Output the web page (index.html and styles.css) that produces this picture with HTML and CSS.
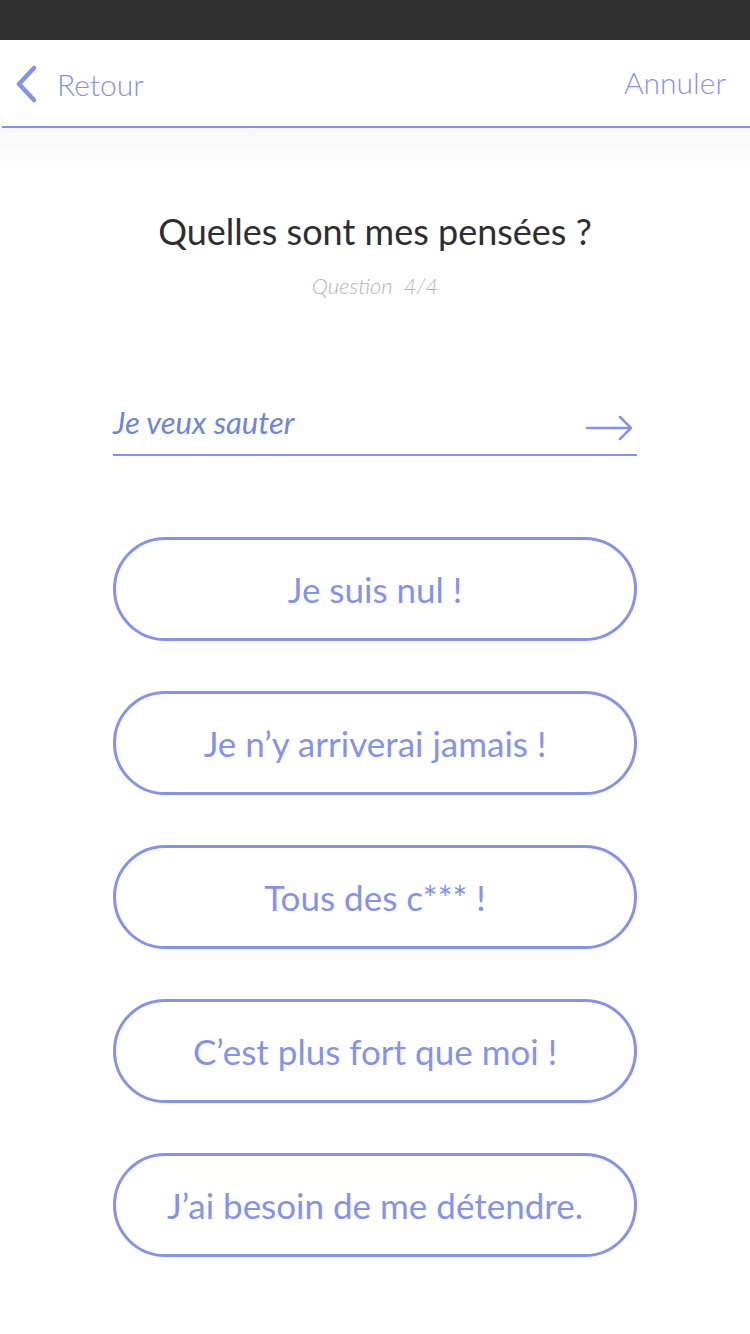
FILE: index.html
```html
<!DOCTYPE html>
<html lang="fr">
<head>
<meta charset="utf-8">
<link rel="stylesheet" href="styles.css">
</head>
<body>
<div class="status"></div>
<header class="nav">
  <a class="back">
    <svg class="chev" width="24" height="38" viewBox="0 0 24 38"><path d="M20 3 L5 19 L20 35" fill="none" stroke="#8592ec" stroke-width="4.5" stroke-linecap="round" stroke-linejoin="round"/></svg>
    <span>Retour</span>
  </a>
  <a class="cancel">Annuler</a>
</header>
<div class="shade"></div>
<main class="content">
  <h1 class="title">Quelles sont mes pensées ?</h1>
  <p class="sub">Question&nbsp; 4/4</p>
  <div class="field">
    <span class="input">Je veux sauter</span>
    <svg class="arrow" width="50" height="28" viewBox="0 0 50 28"><path d="M2 14 H46 M35 3 L46 14 L35 25" fill="none" stroke="#8592ec" stroke-width="2.5" stroke-linecap="round" stroke-linejoin="round"/></svg>
  </div>
  <div class="choices">
    <button class="choice">Je suis nul !</button>
    <button class="choice">Je n’y arriverai jamais !</button>
    <button class="choice">Tous des c*** !</button>
    <button class="choice">C’est plus fort que moi !</button>
    <button class="choice">J’ai besoin de me détendre.</button>
  </div>
</main>
</body>
</html>
```
FILE: styles.css
```css
* { box-sizing: border-box; }
html, body { margin: 0; padding: 0; background: #fff; }
body { width: 750px; height: 1334px; font-family: Lato, "Open Sans", sans-serif; overflow: hidden; }
.status { height: 40px; background: #303030; }
.nav {
  height: 88px;
  margin-left: 2px;
  border-bottom: 2px solid #8592ec;
  display: flex;
  align-items: center;
  justify-content: space-between;
  padding: 0 24px 0 12px;
  color: #8592ec;
  font-size: 30px;
  font-weight: 300;
}
.back { display: flex; align-items: center; gap: 19px; margin-top: 2px; }
.cancel { margin-top: -2px; }
.shade { height: 40px; background: linear-gradient(#f7f7f7, #fff); }
.content { display: flex; flex-direction: column; align-items: center; }
.title { margin: 41px 0 0; font-weight: 400; font-size: 36px; color: #2e2e2e; line-height: 44px; }
.sub { margin: 20px 0 0; font-style: italic; font-size: 22px; color: #b3b3b3; font-weight: 300; line-height: 26px; }
.field {
  margin-top: 87px;
  width: 524px;
  height: 70px;
  border-bottom: 2px solid #8592ec;
  display: flex;
  align-items: flex-end;
  justify-content: space-between;
  padding-right: 2px;
}
.input { font-style: italic; font-size: 31px; line-height: 38px; color: #6d86d6; margin-bottom: 13px; font-weight: 400; }
.arrow { margin-bottom: 12px; display: block; }
.choices { margin-top: 81px; display: flex; flex-direction: column; gap: 50px; }
.choice {
  width: 524px;
  height: 104px;
  border: 3px solid #8592ec;
  border-radius: 52px;
  background: #fff;
  color: #8592ec;
  font-family: Lato, "Open Sans", sans-serif;
  font-size: 35px;
  font-weight: 400;
  padding: 0;
}
```
